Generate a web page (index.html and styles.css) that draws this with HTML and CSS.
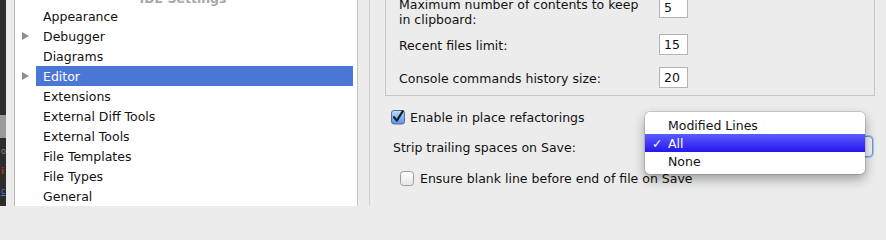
FILE: index.html
```html
<!DOCTYPE html>
<html>
<head>
<meta charset="utf-8">
<link rel="stylesheet" href="styles.css">
</head>
<body>
<div class="app">
  <div class="ide-strip">
    <div class="strip-top"></div>
    <div class="strip-band"></div>
    <div class="strip-frag frag-grey">o</div>
    <div class="strip-frag frag-red">i</div>
    <div class="strip-frag frag-blue">c</div>
  </div>
  <div class="gutter"></div>
  <div class="sidebar">
    <div class="sb-title"><span>IDE Settings</span></div>
    <ul class="tree">
      <li class="row"><span class="toggle"></span><span class="label">Appearance</span></li>
      <li class="row"><span class="toggle"><span class="tri"></span></span><span class="label">Debugger</span></li>
      <li class="row"><span class="toggle"></span><span class="label">Diagrams</span></li>
      <li class="row"><span class="toggle"><span class="tri"></span></span><span class="label selected">Editor</span></li>
      <li class="row"><span class="toggle"></span><span class="label">Extensions</span></li>
      <li class="row"><span class="toggle"></span><span class="label">External Diff Tools</span></li>
      <li class="row"><span class="toggle"></span><span class="label">External Tools</span></li>
      <li class="row"><span class="toggle"></span><span class="label">File Templates</span></li>
      <li class="row"><span class="toggle"></span><span class="label">File Types</span></li>
      <li class="row"><span class="toggle"></span><span class="label">General</span></li>
    </ul>
  </div>
  <div class="splitter"></div>
  <div class="main">
    <div class="group">
      <div class="grow grow-first">
        <div class="glabel">Maximum number of contents to keep<br>in clipboard:</div>
        <div class="field field-first">5</div>
      </div>
      <div class="grow grow-mid">
        <div class="glabel">Recent files limit:</div>
        <div class="field">15</div>
      </div>
      <div class="grow">
        <div class="glabel">Console commands history size:</div>
        <div class="field">20</div>
      </div>
    </div>
    <div class="opt opt-refactor">
      <svg class="cb" width="14" height="15" viewBox="0 0 14 15">
        <defs>
          <linearGradient id="cbg" x1="0" y1="0" x2="0" y2="1">
            <stop offset="0" stop-color="#c6dbf6"/>
            <stop offset="0.5" stop-color="#8db5ea"/>
            <stop offset="1" stop-color="#5f93e0"/>
          </linearGradient>
        </defs>
        <rect x="0.5" y="0.5" width="13" height="13.5" rx="2.5" fill="url(#cbg)" stroke="#4f6f9c"/>
        <path d="M3 7.2 L5.8 10.6 L11.8 1.2" fill="none" stroke="#13203c" stroke-width="2.2" stroke-linecap="round" stroke-linejoin="round"/>
      </svg>
      <span class="opt-text">Enable in place refactorings</span>
    </div>
    <div class="opt opt-strip">
      <span class="strip-text">Strip trailing spaces on Save:</span>
      <div class="combo"></div>
    </div>
    <div class="opt opt-ensure">
      <svg class="cb" width="14" height="15" viewBox="0 0 14 15">
        <defs>
          <linearGradient id="cbw" x1="0" y1="0" x2="0" y2="1">
            <stop offset="0" stop-color="#ffffff"/>
            <stop offset="1" stop-color="#e6e6e6"/>
          </linearGradient>
        </defs>
        <rect x="0.5" y="0.5" width="13" height="14" rx="3" fill="url(#cbw)" stroke="#9a9a9a"/>
      </svg>
      <span class="opt-text ensure-text">Ensure blank line before end of file on Save</span>
    </div>
  </div>
</div>
<div class="popup">
  <div class="pitem">Modified Lines</div>
  <div class="pitem psel"><span class="check">✓</span>All</div>
  <div class="pitem">None</div>
</div>
</body>
</html>
```
FILE: styles.css
```css
html, body {
  margin: 0;
  padding: 0;
  background: #ececec;
}
body {
  width: 886px;
  height: 206px;
  overflow: hidden;
  font-family: "DejaVu Sans", "Liberation Sans", sans-serif;
  font-size: 12.5px;
  color: #111;
  position: relative;
}
.app {
  display: flex;
  height: 206px;
}
.ide-strip {
  width: 6px;
  background: #2c2c2c;
  display: flex;
  flex-direction: column;
  overflow: hidden;
}
.strip-top {
  height: 115px;
}
.strip-band {
  height: 23px;
  background: #9a9a9a;
}
.strip-frag {
  height: 20px;
  line-height: 20px;
  font-size: 8px;
  padding-left: 1px;
}
.frag-grey { color: #8a8a8a; margin-top: 4px; }
.frag-red { color: #c8321e; font-weight: bold; }
.frag-blue { color: #4a78d0; text-decoration: underline; }
.gutter {
  width: 8px;
  background: #ececec;
  border-right: 1px solid #b9b9b9;
}
.sidebar {
  width: 342px;
  background: #ffffff;
  border-right: 1px solid #c4c4c4;
  display: flex;
  flex-direction: column;
}
.sb-title {
  height: 6px;
  display: flex;
  align-items: flex-end;
  justify-content: center;
}
.sb-title span {
  font-weight: bold;
  color: #a8a8a8;
  line-height: 14px;
  font-size: 12.5px;
  padding-right: 6px;
}
.tree {
  list-style: none;
  margin: 0;
  padding: 0;
}
.row {
  display: flex;
  height: 20px;
}
.toggle {
  width: 21px;
  display: flex;
  align-items: center;
}
.tri {
  width: 0;
  height: 0;
  margin-left: 7px;
  border-left: 7px solid #8f8f8f;
  border-top: 4.5px solid transparent;
  border-bottom: 4.5px solid transparent;
}
.label {
  width: 310px;
  padding-left: 7px;
  padding-top: 1px;
  height: 19px;
  line-height: 20px;
  color: #111;
}
.label.selected {
  background: #4a77d6;
  color: #ffffff;
}
.splitter {
  width: 11px;
  border-right: 1px solid #d0d0d0;
}
.main {
  flex: 1;
  padding: 0 11px 0 15px;
  display: flex;
  flex-direction: column;
}
.group {
  margin-top: -10px;
  border: 1px solid #c6c6c6;
  padding: 5px 0 7px 13px;
}
.grow {
  display: flex;
  align-items: center;
  height: 21px;
}
.grow-first {
  align-items: flex-start;
  height: 30px;
  margin-bottom: 8px;
}
.grow-mid {
  margin-bottom: 12px;
}
.glabel {
  width: 260px;
  line-height: 15px;
  padding-top: 2px;
}
.grow-first .glabel {
  padding-top: 1px;
}
.field {
  width: 23px;
  height: 19px;
  line-height: 20px;
  padding-left: 4px;
  background: #ffffff;
  border: 1px solid #b4b4b4;
}
.field-first {
  margin-top: 1px;
}
.opt {
  display: flex;
  align-items: center;
}
.opt-refactor {
  height: 18px;
  margin-top: 12px;
  padding-left: 6px;
}
.opt-text {
  margin-left: 5px;
  padding-top: 1px;
}
.opt-strip {
  height: 21px;
  margin-top: 10px;
  padding-left: 8px;
}
.strip-text {
  padding-top: 2px;
}
.combo {
  margin-left: auto;
  margin-right: 2px;
  width: 220px;
  height: 19px;
  border: 1px solid #6e97d4;
  border-radius: 4px;
  background: #f2f2f2;
  box-shadow: 0 0 0 1px #a9c3ea;
}
.opt-ensure {
  height: 18px;
  margin-top: 12px;
  padding-left: 15px;
}
.ensure-text {
  margin-left: 6px;
}
.popup {
  position: absolute;
  left: 645px;
  top: 112px;
  width: 220px;
  padding: 4px 0;
  background: #ffffff;
  border-radius: 5px;
  box-shadow: 0 0 0 1px rgba(0, 0, 0, 0.12), 0 5px 12px rgba(0, 0, 0, 0.35);
}
.pitem {
  height: 18px;
  line-height: 20px;
  padding-left: 23px;
  position: relative;
  color: #111;
}
.psel {
  background: linear-gradient(#5b5dff, #2417ee);
  color: #ffffff;
}
.check {
  position: absolute;
  left: 7px;
  top: 0;
}
```
